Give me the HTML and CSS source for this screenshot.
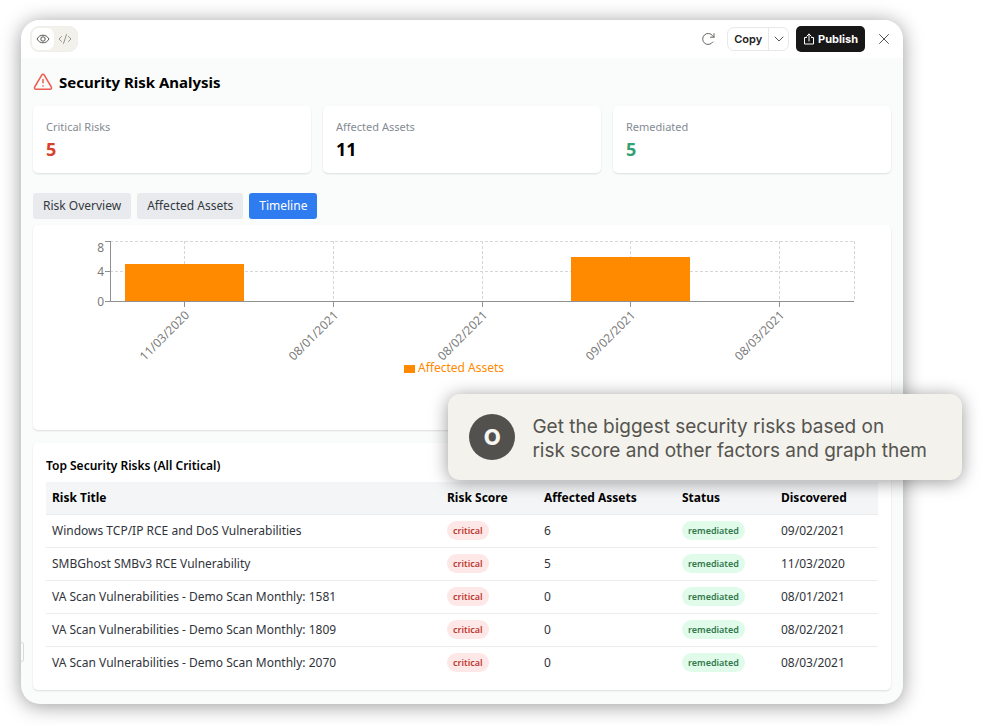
FILE: index.html
```html
<!DOCTYPE html>
<html lang="en">
<head>
<meta charset="utf-8">
<meta name="viewport" content="width=device-width, initial-scale=1">
<title>Security Risk Analysis</title>
<link rel="stylesheet" href="styles.css">
</head>
<body>
<div class="window">
  <header class="toolbar">
    <div class="view-switch">
      <button class="view-btn view-btn-active" type="button" aria-label="Preview">
        <svg width="14" height="14" viewBox="0 0 14 14" fill="none" stroke="#55554f" stroke-width="1"><path d="M1 7C2.600 4.300 4.600 3.200 7 3.200S11.400 4.300 13 7C11.400 9.700 9.400 10.800 7 10.800S2.600 9.700 1 7Z"/><circle cx="7" cy="7" r="2.200"/></svg>
      </button>
      <button class="view-btn" type="button" aria-label="Code">
        <svg width="14" height="14" viewBox="0 0 14 14" fill="none" stroke="#96968f" stroke-width="1" stroke-linecap="round" stroke-linejoin="round"><path d="M3.500 4.500 1 7l2.500 2.500M10.500 4.500 13 7l-2.500 2.500M8.500 2.500l-3 9"/></svg>
      </button>
    </div>
    <div class="actions">
      <button class="icon-btn" type="button" aria-label="Refresh">
        <svg width="16" height="16" viewBox="0 0 16 16" fill="none" stroke="#66665f" stroke-width="1" stroke-linecap="round"><path d="M12.800 11A5.500 5.500 0 1 1 12.600 4.700L14 6.200M14 2.600V6.200H10.400"/></svg>
      </button>
      <div class="split">
        <button class="copy-btn" type="button">Copy</button>
        <button class="more-btn" type="button" aria-label="More copy options">
          <svg width="10" height="10" viewBox="0 0 10 10" fill="none" stroke="#55554f" stroke-width="1" stroke-linecap="round" stroke-linejoin="round"><path d="M1 3l4 4 4-4"/></svg>
        </button>
      </div>
      <button class="publish-btn" type="button">
        <svg width="12" height="12" viewBox="0 0 12 12" fill="none" stroke="#fff" stroke-width="1" stroke-linecap="round" stroke-linejoin="round"><path d="M3.500 4.500H1.500v6.500h9V4.500H8.500M6 8V1M3.800 3.200 6 1l2.200 2.200"/></svg>
        Publish
      </button>
      <button class="icon-btn" type="button" aria-label="Close">
        <svg width="12" height="12" viewBox="0 0 12 12" fill="none" stroke="#55554f" stroke-width="1" stroke-linecap="round"><path d="M1.500 1.500l9 9M10.500 1.500l-9 9"/></svg>
      </button>
    </div>
  </header>
  <main class="content">
    <h1 class="title">
      <svg width="20" height="20" viewBox="0 0 20 20" fill="none" stroke="#ee5b50" stroke-width="1.500" stroke-linecap="round" stroke-linejoin="round"><path d="M8.700 3.100 1.700 15a1.500 1.500 0 0 0 1.300 2.300h14a1.500 1.500 0 0 0 1.300-2.300L11.300 3.100a1.500 1.500 0 0 0-2.600 0ZM10 7.500v3.300M10 13.800v.1"/></svg>
      Security Risk Analysis
    </h1>
    <section class="stats">
      <div class="card stat"><span class="stat-label">Critical Risks</span><strong class="stat-value red">5</strong></div>
      <div class="card stat"><span class="stat-label">Affected Assets</span><strong class="stat-value">11</strong></div>
      <div class="card stat"><span class="stat-label">Remediated</span><strong class="stat-value green">5</strong></div>
    </section>
    <nav class="tabs">
      <button class="tab" type="button">Risk Overview</button>
      <button class="tab" type="button">Affected Assets</button>
      <button class="tab tab-active" type="button">Timeline</button>
    </nav>
    <section class="card chart">
      <svg class="chart-svg" viewBox="0 0 858 205" role="img" aria-label="Affected assets by date">
        <path class="grid" d="M77 16.500H821M77 46.500H821M151.500 16V76M300.500 16V76M449.500 16V76M597.500 16V76M746.500 16V76M821.500 16V76"/>
        <rect class="bar" x="92" y="39" width="119" height="38"/>
        <rect class="bar" x="538" y="32" width="119" height="45"/>
        <path class="axis" d="M77.500 16V77M72 16.500H77M72 46.500H77M72 76.500H821M151.500 77V82M300.500 77V82M449.500 77V82M597.500 77V82M746.500 77V82"/>
        <g class="tick">
          <text x="71" y="27">8</text><text x="71" y="51">4</text><text x="71" y="81">0</text>
        </g>
        <g class="tick">
          <text transform="translate(157 91) rotate(-45)">11/03/2020</text>
          <text transform="translate(306 91) rotate(-45)">08/01/2021</text>
          <text transform="translate(455 91) rotate(-45)">08/02/2021</text>
          <text transform="translate(603 91) rotate(-45)">09/02/2021</text>
          <text transform="translate(752 91) rotate(-45)">08/03/2021</text>
        </g>
        <rect class="bar" x="371" y="140" width="11" height="8"/>
        <text class="legend" x="385" y="147">Affected Assets</text>
      </svg>
    </section>
    <section class="card risks">
      <h2 class="risks-title">Top Security Risks (All Critical)</h2>
      <table class="table">
        <colgroup><col><col class="c-score"><col class="c-assets"><col class="c-status"><col class="c-date"></colgroup>
        <thead><tr><th>Risk Title</th><th>Risk Score</th><th>Affected Assets</th><th>Status</th><th>Discovered</th></tr></thead>
        <tbody>
          <tr><td>Windows TCP/IP RCE and DoS Vulnerabilities</td><td><span class="badge critical">critical</span></td><td>6</td><td><span class="badge remediated">remediated</span></td><td>09/02/2021</td></tr>
          <tr><td>SMBGhost SMBv3 RCE Vulnerability</td><td><span class="badge critical">critical</span></td><td>5</td><td><span class="badge remediated">remediated</span></td><td>11/03/2020</td></tr>
          <tr><td>VA Scan Vulnerabilities - Demo Scan Monthly: 1581</td><td><span class="badge critical">critical</span></td><td>0</td><td><span class="badge remediated">remediated</span></td><td>08/01/2021</td></tr>
          <tr><td>VA Scan Vulnerabilities - Demo Scan Monthly: 1809</td><td><span class="badge critical">critical</span></td><td>0</td><td><span class="badge remediated">remediated</span></td><td>08/02/2021</td></tr>
          <tr><td>VA Scan Vulnerabilities - Demo Scan Monthly: 2070</td><td><span class="badge critical">critical</span></td><td>0</td><td><span class="badge remediated">remediated</span></td><td>08/03/2021</td></tr>
        </tbody>
      </table>
    </section>
  </main>
  <span class="handle"></span>
  <aside class="prompt">
    <span class="avatar">O</span>
    <p class="prompt-text">Get the biggest security risks based on<br>risk score and other factors and graph them</p>
  </aside>
</div>
</body>
</html>
```
FILE: styles.css
```css
* { box-sizing: border-box; }

body {
  margin: 0;
  padding: 20px 80px 22px 21px;
  background: #fff;
  color: #000;
  font-family: "Noto Sans", "Open Sans", sans-serif;
  font-size: 12px;
  line-height: 18px;
}

button {
  margin: 0;
  padding: 0;
  border: 0;
  background: none;
  font: inherit;
  color: inherit;
}

svg { display: block; flex: none; }

.window {
  position: relative;
  border-radius: 19px;
  background: #fafcfb;
  box-shadow: 0 2px 20px rgba(0, 0, 0, 0.4);
}

.toolbar {
  display: flex;
  align-items: center;
  justify-content: space-between;
  height: 38px;
  padding: 0 7px 0 9px;
  border-radius: 19px 19px 0 0;
  background: #fff;
}

.view-switch {
  display: flex;
  padding: 1px;
  border: 1px solid #efeee8;
  border-radius: 9px;
  background: #f2f1ec;
}

.view-btn {
  display: grid;
  place-items: center;
  width: 22px;
  height: 22px;
  border-radius: 7px;
}

.view-btn-active { background: #fff; }

.actions {
  display: flex;
  align-items: center;
  gap: 7px;
  font-family: Inter, sans-serif;
  font-size: 11px;
  font-weight: 600;
}

.icon-btn {
  display: grid;
  place-items: center;
  width: 24px;
  height: 24px;
}

.split {
  display: flex;
  height: 24px;
  border: 1px solid #e8e8e6;
  border-radius: 7px;
}

.copy-btn { padding: 0 6px; color: #222; }

.more-btn {
  display: grid;
  place-items: center;
  width: 20px;
  border-left: 1px solid #e8e8e6;
}

.publish-btn {
  display: flex;
  align-items: center;
  gap: 3px;
  height: 26px;
  padding: 0 7px;
  border-radius: 5px;
  background: #171717;
  color: #fff;
  font-weight: 700;
}

.content { padding: 12px 12px 14px; }

.title {
  display: flex;
  align-items: center;
  gap: 6px;
  margin: 0 0 12px;
  font-size: 15px;
  font-weight: 700;
  line-height: 24px;
}

.card {
  border-radius: 5px;
  background: #fff;
  box-shadow: 0 1px 2px rgba(0, 0, 0, 0.12);
}

.stats {
  display: grid;
  grid-template-columns: repeat(3, 1fr);
  gap: 12px;
}

.stat {
  display: flex;
  flex-direction: column;
  padding: 12px 13px 11px;
}

.stat-label { font-size: 11px; color: #858b93; }
.stat-value { font-size: 18px; font-weight: 700; line-height: 26px; }
.red { color: #d8412f; }
.green { color: #35a074; }

.tabs {
  display: flex;
  gap: 6px;
  margin: 20px 0 6px;
}

.tab {
  height: 26px;
  padding: 0 10px;
  border-radius: 3px;
  background: #e9eaee;
  color: #333940;
}

.tab-active { background: #2f7bf0; color: #fff; }

.chart-svg { width: 100%; height: auto; }
.grid { fill: none; stroke: #d6d6d6; stroke-dasharray: 3 2; }
.axis { fill: none; stroke: #909090; }
.bar { fill: #ff8a00; }
.tick { fill: #7b7b7b; font-size: 12px; text-anchor: end; }
.legend { fill: #ff8a00; font-size: 12px; }

.risks {
  margin-top: 13px;
  padding: 13px 13px 11px;
}

.risks-title {
  margin: 0 0 7px;
  font-size: 12px;
  font-weight: 600;
  line-height: 19px;
}

.table {
  width: 100%;
  border-collapse: collapse;
  table-layout: fixed;
}

.c-score { width: 97px; }
.c-assets { width: 138px; }
.c-status { width: 99px; }
.c-date { width: 103px; }

th, td {
  height: 33px;
  padding: 0 6px;
  border-bottom: 1px solid #ebecee;
  text-align: left;
  white-space: nowrap;
}

th { height: 32px; background: #f4f5f7; font-weight: 700; }
td { color: #30343a; }
tr:last-child td { border-bottom: 0; }

.badge {
  display: inline-block;
  padding: 0 6px;
  border-radius: 10px;
  font-size: 9px;
  font-weight: 600;
  line-height: 19px;
  vertical-align: middle;
}

.critical { background: #fee7e7; color: #bd3a31; }
.remediated { background: #e0fbe9; color: #32794f; }

.handle {
  position: absolute;
  left: 0;
  bottom: 42px;
  width: 3px;
  height: 20px;
  border: 1px solid #dcdad7;
  border-left: 0;
  border-radius: 0 3px 3px 0;
}

.prompt {
  position: absolute;
  top: 374px;
  right: -59px;
  display: flex;
  align-items: center;
  gap: 17px;
  padding: 17px 35px 17px 21px;
  border-radius: 12px;
  background: #f3f2ed;
  box-shadow: 0 2px 18px rgba(0, 0, 0, 0.4);
}

.avatar {
  display: grid;
  place-items: center;
  width: 46px;
  height: 46px;
  border-radius: 50%;
  background: #52514e;
  color: #f7f6f1;
  font-family: Inter, sans-serif;
  font-size: 22px;
  font-weight: 800;
}

.prompt-text {
  margin: 0;
  padding-top: 4px;
  color: #55544f;
  font-family: Inter, sans-serif;
  font-size: 19px;
  line-height: 24px;
  white-space: nowrap;
}
```
